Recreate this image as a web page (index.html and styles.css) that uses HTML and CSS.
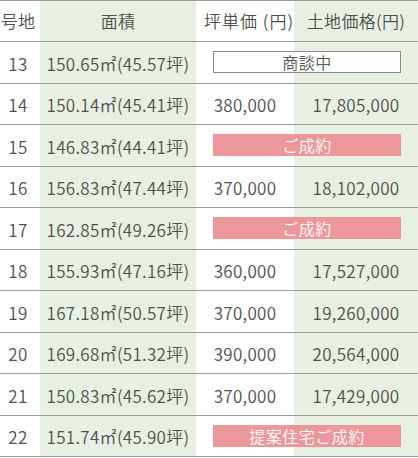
FILE: index.html
```html
<!DOCTYPE html>
<html lang="ja">
<head>
<meta charset="utf-8">
<link rel="stylesheet" href="styles.css">
</head>
<body>
<table class="lots">
  <colgroup>
    <col class="c-no">
    <col class="c-area">
    <col class="c-unit">
    <col class="c-price">
  </colgroup>
  <thead>
    <tr>
      <th class="no">号地</th>
      <th class="green">面積</th>
      <th class="unit-head">坪単価 (円)</th>
      <th class="green">土地価格(円)</th>
    </tr>
  </thead>
  <tbody>
    <tr>
      <td class="no">13</td>
      <td class="green">150.65㎡(45.57坪)</td>
      <td colspan="2" class="span"><div class="badge badge-talk">商談中</div></td>
    </tr>
    <tr>
      <td class="no">14</td>
      <td class="green">150.14㎡(45.41坪)</td>
      <td>380,000</td>
      <td class="green">17,805,000</td>
    </tr>
    <tr>
      <td class="no">15</td>
      <td class="green">146.83㎡(44.41坪)</td>
      <td colspan="2" class="span"><div class="badge badge-sold">ご成約</div></td>
    </tr>
    <tr>
      <td class="no">16</td>
      <td class="green">156.83㎡(47.44坪)</td>
      <td>370,000</td>
      <td class="green">18,102,000</td>
    </tr>
    <tr>
      <td class="no">17</td>
      <td class="green">162.85㎡(49.26坪)</td>
      <td colspan="2" class="span"><div class="badge badge-sold">ご成約</div></td>
    </tr>
    <tr>
      <td class="no">18</td>
      <td class="green">155.93㎡(47.16坪)</td>
      <td>360,000</td>
      <td class="green">17,527,000</td>
    </tr>
    <tr>
      <td class="no">19</td>
      <td class="green">167.18㎡(50.57坪)</td>
      <td>370,000</td>
      <td class="green">19,260,000</td>
    </tr>
    <tr>
      <td class="no">20</td>
      <td class="green">169.68㎡(51.32坪)</td>
      <td>390,000</td>
      <td class="green">20,564,000</td>
    </tr>
    <tr>
      <td class="no">21</td>
      <td class="green">150.83㎡(45.62坪)</td>
      <td>370,000</td>
      <td class="green">17,429,000</td>
    </tr>
    <tr>
      <td class="no">22</td>
      <td class="green">151.74㎡(45.90坪)</td>
      <td colspan="2" class="span"><div class="badge badge-sold">提案住宅ご成約</div></td>
    </tr>
  </tbody>
</table>
</body>
</html>
```
FILE: styles.css
```css
html, body {
  margin: 0;
  padding: 0;
  background: #fff;
}

body {
  font-family: "Noto Sans CJK JP", "Noto Sans", sans-serif;
  font-weight: 350;
  color: #505050;
}

.lots {
  width: 418px;
  border-collapse: collapse;
  table-layout: fixed;
  border-top: 1px solid #999;
  border-bottom: 1px solid #999;
}

.c-no { width: 40px; }
.c-area { width: 156px; }
.c-unit { width: 98px; }
.c-price { width: 124px; }

.lots th,
.lots td {
  padding: 0;
  text-align: center;
  font-size: 17px;
  font-weight: 350;
  letter-spacing: 0.3px;
  white-space: nowrap;
  border-bottom: 1px solid #999;
  line-height: 24px;
}

.lots thead tr { height: 41px; }
.lots tbody tr { height: 41.5px; }

.lots td {
  padding-top: 3px;
}

.lots .no {
  padding-right: 4px;
}

.lots .unit-head {
  letter-spacing: 1px;
  padding-left: 8px;
}

.lots .green {
  background: #e7f0e2;
}

.lots .span {
  padding-top: 0;
  background: linear-gradient(to right, #fff 98px, #e7f0e2 98px);
}

.badge {
  width: 85%;
  height: 22px;
  margin: 0 auto;
  box-sizing: border-box;
  font-size: 16px;
  line-height: 22px;
  letter-spacing: 0.5px;
}

.badge-talk {
  background: #fff;
  border: 1px solid #8a8a8a;
  line-height: 20px;
  color: #555;
}

.badge-sold {
  background: #ec979a;
  color: #fff;
}
```
